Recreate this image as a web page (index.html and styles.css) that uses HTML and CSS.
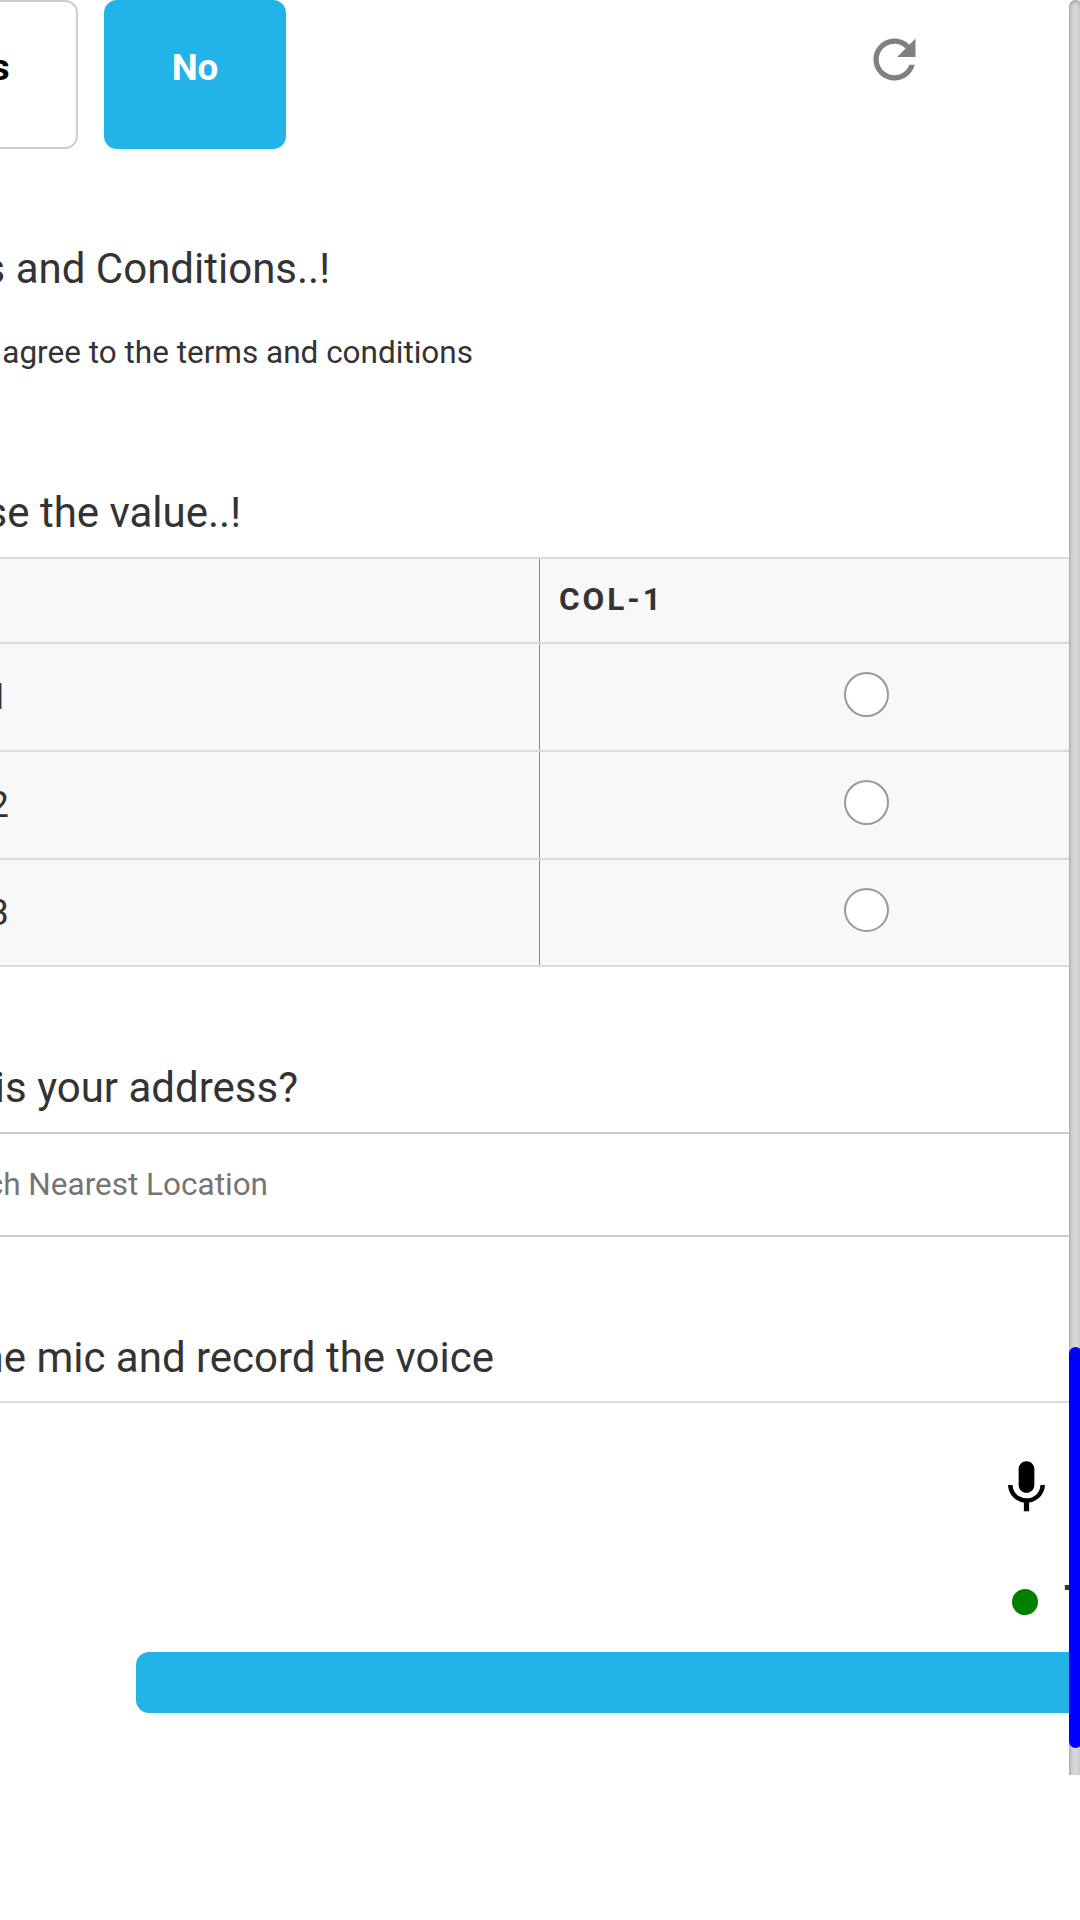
FILE: index.html
```html
<!DOCTYPE html>
<html lang="en">
<head>
<meta charset="utf-8">
<title>Survey form</title>
<link rel="stylesheet" href="styles.css">
</head>
<body>
<div class="viewport">
  <main class="form">
    <section class="choices">
      <button class="choice choice-yes">Yes</button>
      <button class="choice choice-no">No</button>
      <svg class="icon refresh" viewBox="0 0 24 24"><path d="M17.65 6.35C16.2 4.9 14.21 4 12 4c-4.42 0-7.99 3.58-7.99 8s3.57 8 7.99 8c3.73 0 6.84-2.55 7.73-6h-2.08c-.82 2.33-3.04 4-5.65 4-3.31 0-6-2.69-6-6s2.69-6 6-6c1.66 0 3.14.69 4.22 1.78L13 11h7V4l-2.35 2.35z"/></svg>
    </section>
    <h2 class="title title-terms"><span>Terms and Conditions..!</span></h2>
    <p class="agree"><span>I agree to the terms and conditions</span></p>
    <h2 class="title title-value"><span>Choose the value..!</span></h2>
    <div class="grid">
      <div class="row head"><div class="label"></div><div class="cell">COL-1</div></div>
      <div class="row"><div class="label"><span>Row-1</span></div><div class="cell"><i class="radio"></i></div></div>
      <div class="row"><div class="label"><span>Row-2</span></div><div class="cell"><i class="radio"></i></div></div>
      <div class="row last"><div class="label"><span>Row-3</span></div><div class="cell"><i class="radio"></i></div></div>
    </div>
    <h2 class="title title-address"><span>What is your address?</span></h2>
    <div class="search"><span>Search Nearest Location</span></div>
    <h2 class="title title-mic"><span>Tap the mic and record the voice</span></h2>
    <section class="recorder">
      <svg class="icon mic" viewBox="0 0 24 24"><path d="M12 14c1.66 0 2.99-1.34 2.99-3L15 5c0-1.66-1.34-3-3-3S9 3.34 9 5v6c0 1.66 1.34 3 3 3zm5.3-3c0 3-2.54 5.1-5.3 5.1S6.7 14 6.7 11H5c0 3.41 2.72 6.23 6 6.72V21h2v-3.28c3.28-.48 6-3.3 6-6.72h-1.7z"/></svg>
      <div class="status"><i class="dot"></i><b>T</b></div>
    </section>
    <div class="submit"></div>
  </main>
  <aside class="track"><div class="thumb"></div></aside>
</div>
</body>
</html>
```
FILE: styles.css
```css
* { box-sizing: border-box; }
body { margin: 0; background: #fff; font-family: Roboto, sans-serif; color: #333; }
.viewport { display: flex; width: 1080px; height: 1775px; overflow: hidden; }
.form { width: 1069px; flex: none; overflow: hidden; }

.choices { display: flex; height: 149px; }
.choice { flex: none; height: 149px; border-radius: 13px; font: bold 36.75px/50px Roboto, sans-serif; padding: 0 0 14px; }
.choice-yes { width: 182px; margin-left: -104px; padding-right: 15px; border: 2px solid #ccc; background: #fff; color: #000; }
.choice-no { width: 182px; margin-left: 26px; border: 0; background: #22b3e9; color: #fff; }
.icon { display: block; width: 63px; height: 63px; }
.refresh { margin: 27.5px 0 0 576.5px; fill: #808080; }

/* Labels end at a fixed edge and run out past the left side of the screen. */
.title, .agree, .search { display: flex; justify-content: flex-end; white-space: nowrap; }
.title { margin: 0; height: 50px; font-size: 42px; line-height: 50px; font-weight: 400; }
.title-terms { margin-top: 95px; width: 330px; }
.agree { margin: 39px 0 0; width: 473px; font-size: 31.5px; line-height: 40px; }
.title-value { margin-top: 115px; width: 241px; }
.title-address { margin-top: 96px; width: 298px; }
.title-mic { margin-top: 96px; width: 494px; }

.grid { margin-top: 19px; border-top: 2px solid #dadada; background: #f8f8f8; }
.row { display: flex; height: 108px; border-bottom: 2px solid #dadada; }
.row.last { height: 107px; }
.head { height: 85px; }
.label { display: flex; justify-content: flex-end; align-items: center; width: 540px; border-right: 1px solid #888; font-size: 36.75px; line-height: 50px; padding: 0 530px 0 0; white-space: nowrap; }
.cell { flex: 1; margin-right: -22px; }
.radio { display: block; width: 45px; height: 45px; margin: 28px 0 0 304px; border: 2px solid #999; border-radius: 50%; background: #fff; }
.last .radio { height: 44px; }
.head .cell { padding: 21px 0 0 19px; font-size: 31.5px; line-height: 40px; font-weight: 700; letter-spacing: 3px; }

.search { margin-top: 19px; height: 105px; border: solid #ccc; border-width: 2px 0; padding: 31px 801px 0 0; font-size: 31.5px; line-height: 40px; color: #757575; }
.recorder { margin-top: 18px; height: 251px; border-top: 2px solid #dadada; padding-top: 53px; }
.mic { margin-left: 995px; }
.status { display: flex; height: 60px; margin: 60px 0 0 1012px; padding-top: 10px; }
.dot { flex: none; width: 26px; height: 26px; border-radius: 50%; background: #008000; }
.status b { margin: -13px 0 0 26px; font-size: 42px; line-height: 50px; }
.submit { width: 960px; height: 61px; margin-left: 136px; border-radius: 13px; background: #22b3e9; }

.track { flex: none; width: 13px; height: 1790px; padding-top: 1347px; border-radius: 7px; background: #d8d8d8; box-shadow: inset 0 0 5px grey; }
.thumb { height: 401px; border-radius: 7px; background: #00f; }
```
